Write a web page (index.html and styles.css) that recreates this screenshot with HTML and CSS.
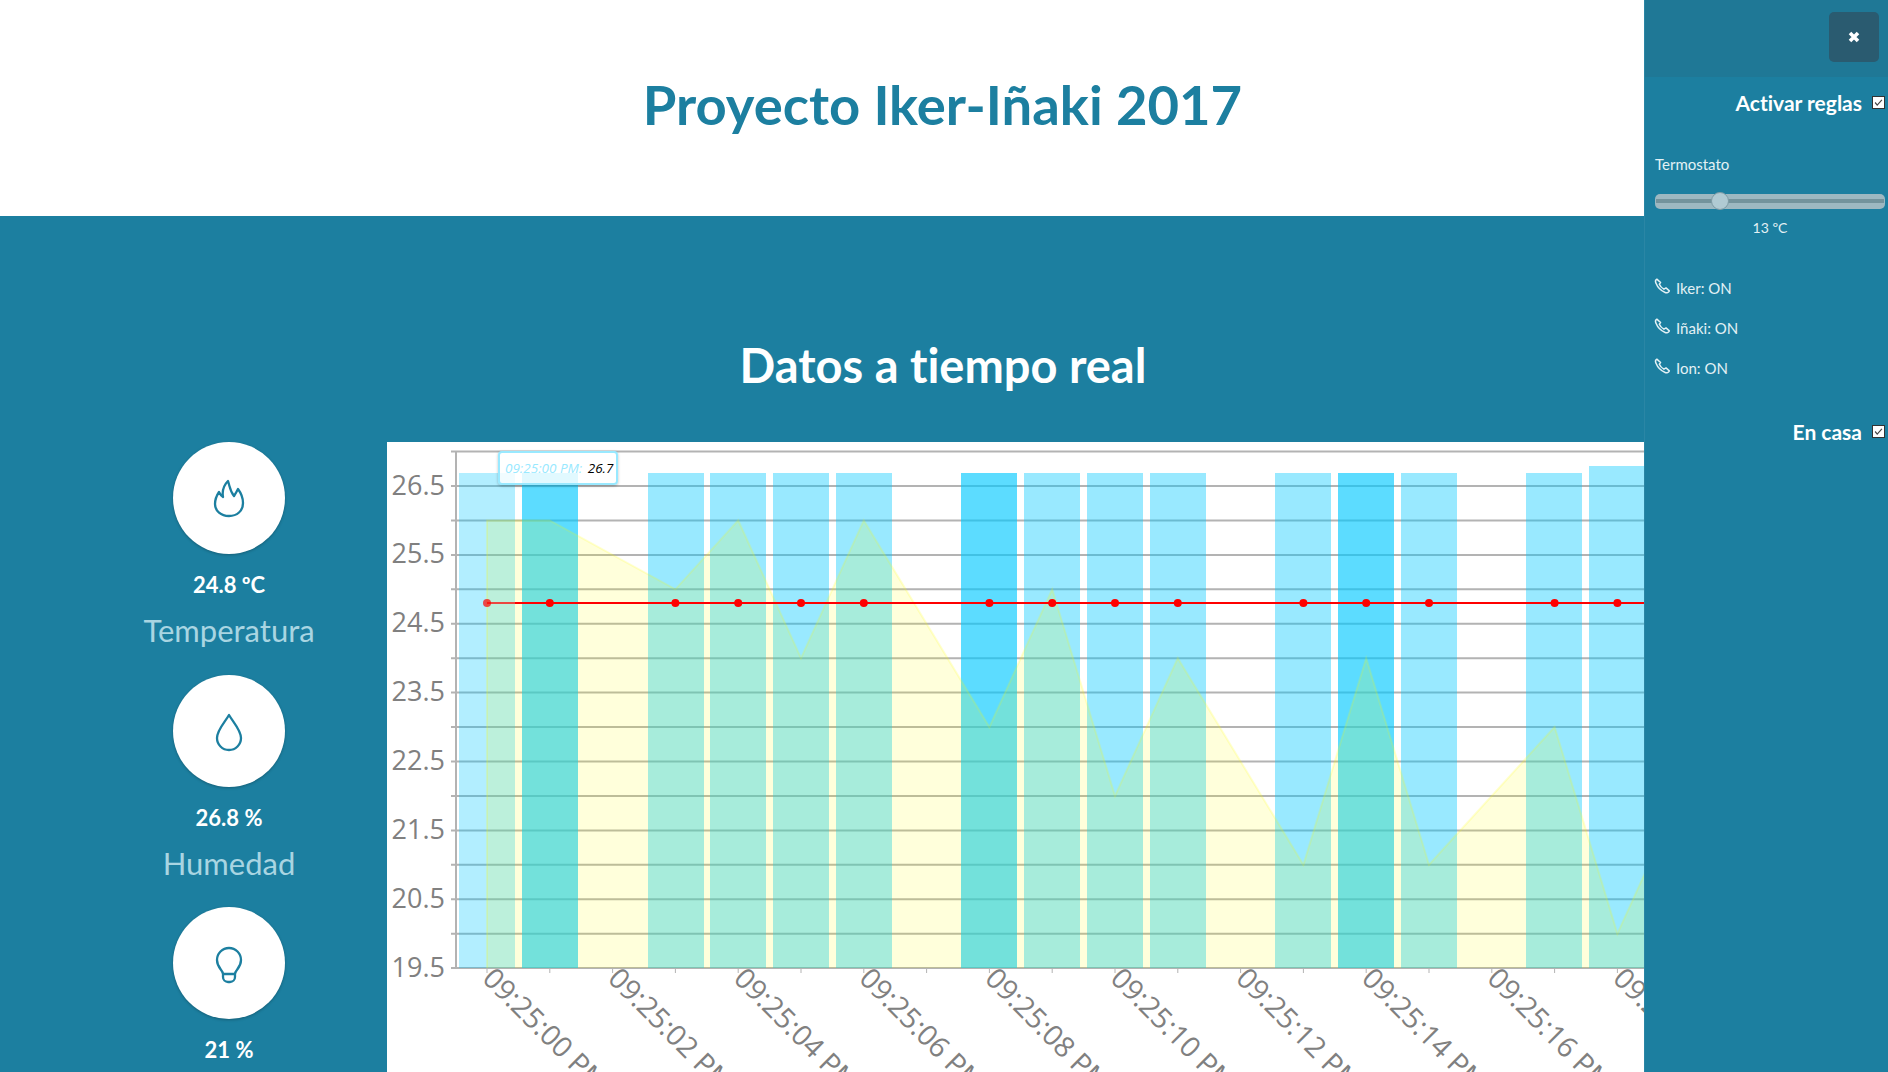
FILE: index.html
```html
<!DOCTYPE html>
<html lang="es">
<head>
    <meta charset="UTF-8">
    <title>Proyecto Iker-Iñaki 2017</title>
    <link rel="stylesheet" href="styles.css">
</head>
<body>
<div class="page">
    <header class="top">
        <h1>Proyecto Iker-Iñaki 2017</h1>
    </header>

    <section class="datos">
        <h2>Datos a tiempo real</h2>
        <div class="datos-row">
            <div class="stats">
                <div class="stat">
                    <div class="stat-circle">
                        <svg class="stat-icon" viewBox="0 0 50 50"><path d="M24 8C26 14 26 18 30 23C32 20 33 18 34 16C37 20 39 25 39 30C39 38 33 43 25 43C17 43 11 38 11 31C11 26 13 22 15 19C16 21 17 23 19 24C18 18 20 12 24 8Z"/></svg>
                    </div>
                    <div class="stat-value">24.8 ºC</div>
                    <div class="stat-label">Temperatura</div>
                </div>
                <div class="stat">
                    <div class="stat-circle">
                        <svg class="stat-icon" viewBox="0 0 50 50"><path d="M25 9C21 16 13 24 13 32A12 12 0 0 0 37 32C37 24 29 16 25 9Z"/></svg>
                    </div>
                    <div class="stat-value">26.8 %</div>
                    <div class="stat-label">Humedad</div>
                </div>
                <div class="stat">
                    <div class="stat-circle">
                        <svg class="stat-icon" viewBox="0 0 50 50"><path d="M19 36C19 32 13 30 13 22A12 12 0 0 1 37 22C37 30 31 32 31 36V39A5 5 0 0 1 26 44H24A5 5 0 0 1 19 39ZM19 36H31"/></svg>
                    </div>
                    <div class="stat-value">21 %</div>
                </div>
            </div>

            <div class="chart">
                <svg class="chart-svg" width="1501" height="630">
                    <g class="grid">
                        <path d="M64 9.6H1501M64 44H1501M64 78.5H1501M64 112.9H1501M64 147.3H1501M64 181.8H1501M64 216.2H1501M64 250.6H1501M64 285H1501M64 319.5H1501M64 353.9H1501M64 388.4H1501M64 422.8H1501M64 457.2H1501M64 491.7H1501M64 526H1501"/>
                        <path d="M69 9V527"/>
                    </g>
                    <path class="ticks" d="M100 526v5M162.8 526v5M225.6 526v5M288.4 526v5M351.2 526v5M414 526v5M476.8 526v5M539.6 526v5M602.4 526v5M665.2 526v5M728 526v5M790.8 526v5M853.6 526v5M916.4 526v5M979.2 526v5M1042 526v5M1104.8 526v5M1167.6 526v5M1230.4 526v5M1293.2 526v5"/>

                    <rect class="bar bar-faded" x="72" y="31" width="56" height="495"/>
                    <rect class="bar bar-hover" x="135" y="31" width="56" height="495"/>
                    <rect class="bar" x="261" y="31" width="56" height="495"/>
                    <rect class="bar" x="323" y="31" width="56" height="495"/>
                    <rect class="bar" x="386" y="31" width="56" height="495"/>
                    <rect class="bar" x="449" y="31" width="56" height="495"/>
                    <rect class="bar bar-hover" x="574" y="31" width="56" height="495"/>
                    <rect class="bar" x="637" y="31" width="56" height="495"/>
                    <rect class="bar" x="700" y="31" width="56" height="495"/>
                    <rect class="bar" x="763" y="31" width="56" height="495"/>
                    <rect class="bar" x="888" y="31" width="56" height="495"/>
                    <rect class="bar bar-hover" x="951" y="31" width="56" height="495"/>
                    <rect class="bar" x="1014" y="31" width="56" height="495"/>
                    <rect class="bar" x="1139" y="31" width="56" height="495"/>
                    <rect class="bar" x="1202" y="24" width="56" height="502"/>

                    <path class="area" d="M100 526V78.4H162.8L288.4 147.3L351.2 78.4L414 216.2L476.8 78.4L602.4 285L665.2 147.3L728 353.9L790.8 216.2L916.4 422.7L979.2 216.2L1042 422.7L1167.6 285L1230.4 491.6L1293.2 353.9V526Z"/>
                    <path class="area-line" d="M100 526V78.4H162.8L288.4 147.3L351.2 78.4L414 216.2L476.8 78.4L602.4 285L665.2 147.3L728 353.9L790.8 216.2L916.4 422.7L979.2 216.2L1042 422.7L1167.6 285L1230.4 491.6L1293.2 353.9"/>

                    <path class="line line-faded" d="M100 161H128"/>
                    <path class="line" d="M128 161H1501"/>
                    <circle class="dot dot-faded" cx="100" cy="161" r="4"/>
                    <circle class="dot" cx="162.8" cy="161" r="4"/>
                    <circle class="dot" cx="288.4" cy="161" r="4"/>
                    <circle class="dot" cx="351.2" cy="161" r="4"/>
                    <circle class="dot" cx="414" cy="161" r="4"/>
                    <circle class="dot" cx="476.8" cy="161" r="4"/>
                    <circle class="dot" cx="602.4" cy="161" r="4"/>
                    <circle class="dot" cx="665.2" cy="161" r="4"/>
                    <circle class="dot" cx="728" cy="161" r="4"/>
                    <circle class="dot" cx="790.8" cy="161" r="4"/>
                    <circle class="dot" cx="916.4" cy="161" r="4"/>
                    <circle class="dot" cx="979.2" cy="161" r="4"/>
                    <circle class="dot" cx="1042" cy="161" r="4"/>
                    <circle class="dot" cx="1167.6" cy="161" r="4"/>
                    <circle class="dot" cx="1230.4" cy="161" r="4"/>

                    <g class="axis-y">
                        <text x="58" y="53">26.5</text>
                        <text x="58" y="121">25.5</text>
                        <text x="58" y="190">24.5</text>
                        <text x="58" y="259">23.5</text>
                        <text x="58" y="328">22.5</text>
                        <text x="58" y="397">21.5</text>
                        <text x="58" y="466">20.5</text>
                        <text x="58" y="535">19.5</text>
                    </g>
                    <g class="axis-x">
                        <text transform="translate(94 538) rotate(45)">09:25:00 PM</text>
                        <text transform="translate(219.6 538) rotate(45)">09:25:02 PM</text>
                        <text transform="translate(345.2 538) rotate(45)">09:25:04 PM</text>
                        <text transform="translate(470.8 538) rotate(45)">09:25:06 PM</text>
                        <text transform="translate(596.4 538) rotate(45)">09:25:08 PM</text>
                        <text transform="translate(722 538) rotate(45)">09:25:10 PM</text>
                        <text transform="translate(847.6 538) rotate(45)">09:25:12 PM</text>
                        <text transform="translate(973.2 538) rotate(45)">09:25:14 PM</text>
                        <text transform="translate(1098.8 538) rotate(45)">09:25:16 PM</text>
                        <text transform="translate(1224.4 538) rotate(45)">09:25:18 PM</text>
                    </g>
                </svg>
                <div class="chart-tip"><span class="tip-time">09:25:00 PM:</span> <span class="tip-val">26.7</span></div>
            </div>
        </div>
    </section>

    <aside class="panel">
        <div class="panel-head">
            <button class="panel-close">
                <svg viewBox="0 0 12 12" width="12" height="12"><path d="M2 2L10 10M10 2L2 10"/></svg>
            </button>
        </div>
        <div class="panel-check first">
            <span>Activar reglas</span>
            <span class="check"><svg viewBox="0 0 13 13"><path d="M2.5 6.5L5 9.5L10.5 3.5"/></svg></span>
        </div>
        <div class="thermo">
            <div class="thermo-title">Termostato</div>
            <div class="slider"><div class="slider-track"></div><div class="slider-thumb"></div></div>
            <div class="thermo-val">13 ºC</div>
        </div>
        <ul class="calls">
            <li><svg class="phone" viewBox="0 0 30 30"><path d="M7 5C5 6 5 8 6 10C8 15 12 19 17 21C19 22 21 21 22 19L18 15.5L15.5 17C13 15.5 11 13.5 10 11L11.5 9Z"/></svg>Iker: ON</li>
            <li><svg class="phone" viewBox="0 0 30 30"><path d="M7 5C5 6 5 8 6 10C8 15 12 19 17 21C19 22 21 21 22 19L18 15.5L15.5 17C13 15.5 11 13.5 10 11L11.5 9Z"/></svg>Iñaki: ON</li>
            <li><svg class="phone" viewBox="0 0 30 30"><path d="M7 5C5 6 5 8 6 10C8 15 12 19 17 21C19 22 21 21 22 19L18 15.5L15.5 17C13 15.5 11 13.5 10 11L11.5 9Z"/></svg>Ion: ON</li>
        </ul>
        <div class="panel-check">
            <span>En casa</span>
            <span class="check"><svg viewBox="0 0 13 13"><path d="M2.5 6.5L5 9.5L10.5 3.5"/></svg></span>
        </div>
    </aside>
</div>
</body>
</html>
```

FILE: styles.css
```css
* {
    padding: 0;
    margin: 0;
    list-style: none;
    border: 0;
    box-sizing: border-box;
}

body {
    font-family: "Lato", "Noto Sans", sans-serif;
    font-variant-ligatures: none;
    color: #fff;
    background: #fff;
}

.page {
    position: relative;
    width: 100vw;
    height: 100vh;
    overflow: hidden;
}

.top {
    height: 216px;
    display: flex;
    align-items: center;
    justify-content: center;
    padding: 0 3px 8px 0;
}

.top h1 {
    font-size: 54.4px;
    font-weight: 700;
    color: #1c7fa0;
}

.datos {
    background: #1c7fa0;
    height: 856px;
}

.datos h2 {
    height: 226px;
    padding: 124px 2px 0 0;
    line-height: 50px;
    font-size: 47px;
    font-weight: 700;
    text-align: center;
}

.datos-row {
    display: flex;
}

.stats {
    width: 387px;
    padding-left: 71px;
    flex-shrink: 0;
}

.stat {
    height: 232.5px;
    display: flex;
    flex-direction: column;
    align-items: center;
}

.stat-circle {
    width: 112px;
    height: 112px;
    flex-shrink: 0;
    border-radius: 50%;
    background: #fff;
    box-shadow: 0 1px 3px rgba(0, 0, 0, 0.25);
    display: flex;
    align-items: center;
    justify-content: center;
}

.stat-icon {
    width: 50px;
    height: 50px;
}

.stat-icon path {
    fill: none;
    stroke: #1c7fa0;
    stroke-width: 2.3;
    stroke-linejoin: round;
}

.stat-value {
    margin-top: 17px;
    height: 28px;
    line-height: 28px;
    font-size: 22px;
    font-weight: 700;
}

.stat-label {
    margin-top: 11px;
    line-height: 40px;
    font-size: 31px;
    font-weight: 400;
    color: #a9d5e2;
}

.chart {
    position: relative;
    flex: 1;
    height: 630px;
    background: #fff;
    overflow: hidden;
}

.chart-svg {
    display: block;
}

.grid path {
    fill: none;
    stroke: #b3b3b3;
    stroke-width: 2;
}

.ticks {
    stroke: #b3b3b3;
    stroke-width: 1;
}

.bar {
    fill: #00c8ff;
    fill-opacity: 0.4;
}

.bar-hover {
    fill-opacity: 0.64;
}

.bar-faded {
    fill-opacity: 0.3;
}

.area {
    fill: #ffff00;
    fill-opacity: 0.14;
}

.area-line {
    fill: none;
    stroke: #ffff00;
    stroke-opacity: 0.18;
    stroke-width: 2;
}

.line {
    stroke: #ff0000;
    stroke-width: 2;
}

.line-faded {
    opacity: 0.7;
}

.dot {
    fill: #ff0000;
}

.dot-faded {
    opacity: 0.7;
}

.axis-y text,
.axis-x text {
    font-family: "Open Sans", "Noto Sans", sans-serif;
    font-size: 27px;
    fill: #808080;
}

.axis-x text {
    font-size: 28.5px;
}

.axis-y text {
    text-anchor: end;
}

.chart-tip {
    position: absolute;
    left: 111px;
    top: 9px;
    width: 120px;
    height: 34px;
    line-height: 30px;
    padding-left: 5px;
    white-space: nowrap;
    background: rgba(255, 255, 255, 0.82);
    border: 2px solid #99e9ff;
    border-radius: 4px;
    box-shadow: 0 1px 3px rgba(0, 0, 0, 0.25);
    font-family: "Open Sans", "Noto Sans", sans-serif;
    font-size: 13.5px;
    font-style: italic;
}

.tip-time {
    color: #99e9ff;
    margin-right: 2px;
}

.tip-val {
    color: #000;
}

.panel {
    position: absolute;
    top: 0;
    right: 0;
    bottom: 0;
    width: 244px;
    background: #1c7fa0;
    border-left: 1px solid #2a86a5;
}

.panel-head {
    height: 77px;
    background: #1f7896;
    display: flex;
    justify-content: flex-end;
    padding: 12px 9px 0 0;
}

.panel-close {
    width: 50px;
    height: 50px;
    background: #2a5b70;
    border-radius: 5px;
    display: flex;
    align-items: center;
    justify-content: center;
}

.panel-close path {
    fill: none;
    stroke: #fff;
    stroke-width: 3.6;
}

.panel-check {
    display: flex;
    justify-content: flex-end;
    align-items: center;
    gap: 10px;
    padding-right: 3px;
    height: 24px;
    font-size: 21px;
    font-weight: 700;
}

.panel-check.first {
    margin-top: 13px;
}

.check {
    width: 13px;
    height: 13px;
    background: #fff;
    border: 1px solid #333;
    display: block;
}

.check svg {
    display: block;
    width: 11px;
    height: 11px;
}

.check path {
    fill: none;
    stroke: #444;
    stroke-width: 1.4;
}

.thermo {
    margin-top: 40px;
    padding: 0 3px 0 10px;
    font-size: 15px;
}

.thermo-title {
    line-height: 20px;
    color: #e3f1f5;
}

.slider {
    position: relative;
    height: 15px;
    margin-top: 20px;
    border-radius: 5px;
    background: #9db8c1;
}

.slider-track {
    position: absolute;
    left: 1px;
    right: 1px;
    top: 5px;
    height: 4px;
    background: #73939c;
}

.slider-thumb {
    position: absolute;
    left: 56px;
    top: -2px;
    width: 18px;
    height: 18px;
    border-radius: 50%;
    background: #b0cad3;
    border: 1px solid #7e9ba5;
}

.thermo-val {
    margin-top: 9px;
    line-height: 20px;
    font-size: 14px;
    text-align: center;
    color: #e3f1f5;
}

.calls {
    margin-top: 30px;
    padding-left: 6px;
    font-size: 15px;
    color: #e3f1f5;
}

.calls li {
    height: 40px;
    display: flex;
    align-items: center;
}

.phone {
    width: 25px;
    height: 25px;
    flex-shrink: 0;
    margin-top: -1px;
}

.phone path {
    fill: none;
    stroke: #e3f1f5;
    stroke-width: 1.8;
    stroke-linejoin: round;
}

.calls + .panel-check {
    margin-top: 31px;
}
```
